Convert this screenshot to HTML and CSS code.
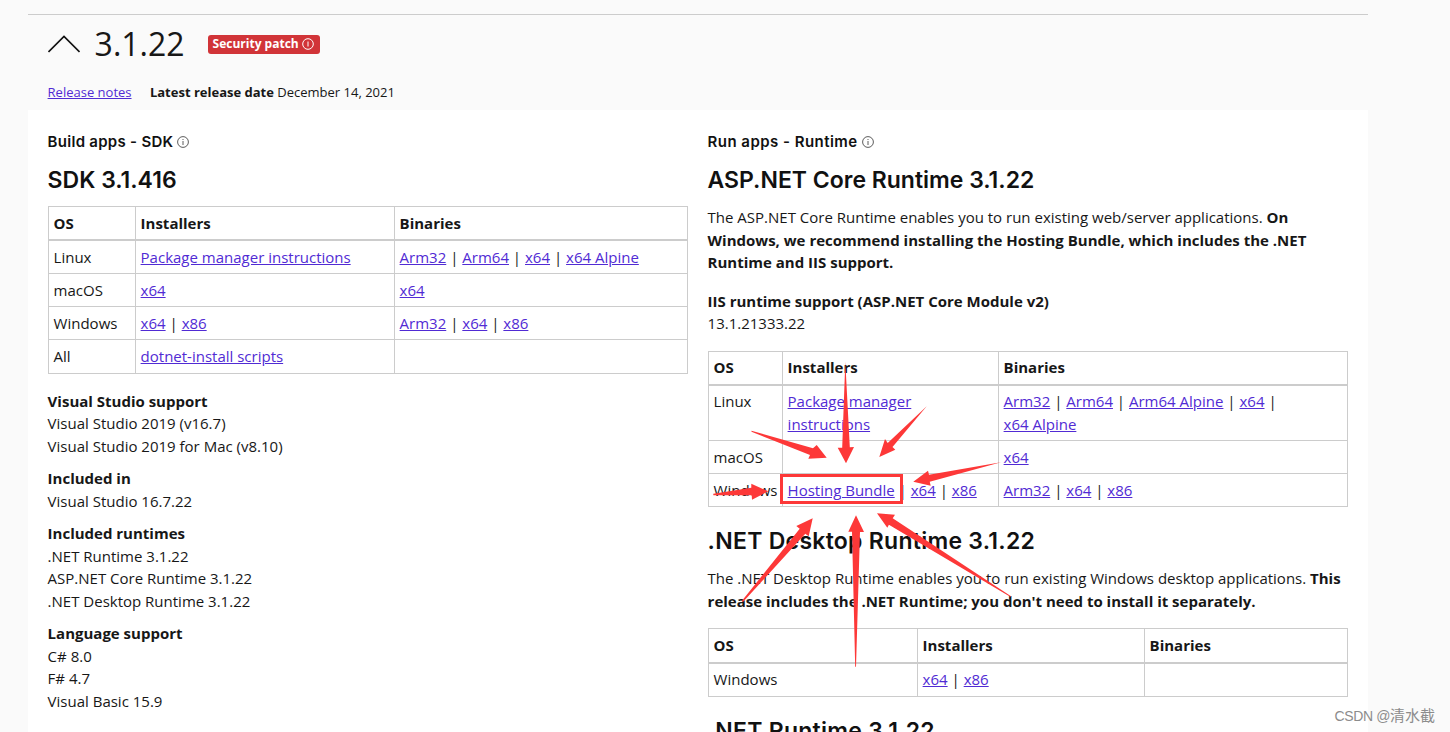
FILE: index.html
```html
<!DOCTYPE html>
<html lang="en">
<head>
  <meta charset="UTF-8" />
  <meta name="viewport" content="width=device-width, initial-scale=1.0"/>
  <title>Download .NET Core 3.1</title>
  <link rel="stylesheet" href="styles.css">
</head>
<body>
  <div class="release">
    <div class="release-header">
      <div class="version-row">
        <svg class="chevron" width="32" height="18" viewBox="0 0 32 18"><path d="M0.5 17L16 1.5L31.5 17" fill="none" stroke="#111" stroke-width="1.6"/></svg>
        <span class="version">3.1.22</span>
        <span class="badge">Security patch
          <svg class="info" width="12" height="12" viewBox="0 0 12 12" fill="none" stroke="currentColor"><circle cx="6" cy="6" r="5.3"/><path d="M6 3.5v5"/></svg>
        </span>
      </div>
      <div class="meta-row">
        <a href="#">Release notes</a>
        <span><b>Latest release date</b> December 14, 2021</span>
      </div>
    </div>

    <div class="release-body">
      <div class="column">
        <h3>Build apps - SDK <svg class="info" width="12" height="12" viewBox="0 0 12 12" fill="none" stroke="currentColor"><circle cx="6" cy="6" r="5.4" stroke-width=".8"/><path d="M6 5v4M6 3v1" stroke-width=".8"/></svg></h3>
        <h2>SDK 3.1.416</h2>
        <table>
          <colgroup><col class="sdk-os"><col class="sdk-inst"><col></colgroup>
          <tr><th>OS</th><th>Installers</th><th>Binaries</th></tr>
          <tr>
            <td>Linux</td>
            <td><a href="#">Package manager instructions</a></td>
            <td><a href="#">Arm32</a> | <a href="#">Arm64</a> | <a href="#">x64</a> | <a href="#">x64 Alpine</a></td>
          </tr>
          <tr><td>macOS</td><td><a href="#">x64</a></td><td><a href="#">x64</a></td></tr>
          <tr>
            <td>Windows</td>
            <td><a href="#">x64</a> | <a href="#">x86</a></td>
            <td><a href="#">Arm32</a> | <a href="#">x64</a> | <a href="#">x86</a></td>
          </tr>
          <tr class="last"><td>All</td><td><a href="#">dotnet-install scripts</a></td><td></td></tr>
        </table>
        <dl>
          <dt>Visual Studio support</dt>
          <dd>Visual Studio 2019 (v16.7)</dd>
          <dd>Visual Studio 2019 for Mac (v8.10)</dd>
          <dt>Included in</dt>
          <dd>Visual Studio 16.7.22</dd>
          <dt>Included runtimes</dt>
          <dd>.NET Runtime 3.1.22</dd>
          <dd>ASP.NET Core Runtime 3.1.22</dd>
          <dd>.NET Desktop Runtime 3.1.22</dd>
          <dt>Language support</dt>
          <dd>C# 8.0</dd>
          <dd>F# 4.7</dd>
          <dd>Visual Basic 15.9</dd>
        </dl>
      </div>

      <div class="column">
        <h3 class="run">Run apps - Runtime <svg class="info" width="12" height="12" viewBox="0 0 12 12" fill="none" stroke="currentColor"><circle cx="6" cy="6" r="5.4" stroke-width=".8"/><path d="M6 5v4M6 3v1" stroke-width=".8"/></svg></h3>
        <h2>ASP.NET Core Runtime 3.1.22</h2>
        <p>The ASP.NET Core Runtime enables you to run existing web/server applications. <b>On Windows, we recommend installing the Hosting Bundle, which includes the .NET Runtime and IIS support.</b></p>
        <p><b>IIS runtime support (ASP.NET Core Module v2)</b><br>13.1.21333.22</p>
        <table class="asp">
          <colgroup><col class="asp-os"><col class="asp-inst"><col></colgroup>
          <tr><th>OS</th><th>Installers</th><th>Binaries</th></tr>
          <tr class="linux">
            <td>Linux</td>
            <td><a href="#">Package manager<br>instructions</a></td>
            <td><a href="#">Arm32</a> | <a href="#">Arm64</a> | <a href="#">Arm64 Alpine</a> | <a href="#">x64</a> |<br><a href="#">x64 Alpine</a></td>
          </tr>
          <tr><td>macOS</td><td></td><td><a href="#">x64</a></td></tr>
          <tr>
            <td>Windows</td>
            <td><a href="#">Hosting Bundle</a> | <a href="#">x64</a> | <a href="#">x86</a></td>
            <td><a href="#">Arm32</a> | <a href="#">x64</a> | <a href="#">x86</a></td>
          </tr>
        </table>
        <h2 class="next">.NET Desktop Runtime 3.1.22</h2>
        <p>The .NET Desktop Runtime enables you to run existing Windows desktop applications. <b>This release includes the .NET Runtime; you don't need to install it separately.</b></p>
        <table class="desktop">
          <colgroup><col class="desk-os"><col class="desk-inst"><col></colgroup>
          <tr><th>OS</th><th>Installers</th><th>Binaries</th></tr>
          <tr><td>Windows</td><td><a href="#">x64</a> | <a href="#">x86</a></td><td></td></tr>
        </table>
        <h2 class="next">.NET Runtime 3.1.22</h2>
      </div>
    </div>
  </div>

  <!-- arrows pointing at the hosting bundle link -->
  <svg class="marks" width="1450" height="732" viewBox="0 0 1450 732" fill="#fd3838">
    <rect x="781.5" y="475.5" width="120" height="27" fill="none" stroke="#fd3838" stroke-width="3"/>
    <path d="M751.5 430.8L813 448.3L816.7 445L826.7 457.7L808.3 458.7L810 455L751.5 431.8Z"/>
    <path d="M845.3 361.7L849.8 447.3L854 447L846 463.3L837.7 447.7L842.2 447.7Z"/>
    <path d="M926.7 406.3L892.5 447L895.3 449.7L879.3 457L885 439L887.7 443Z"/>
    <path d="M1001 462.3L929.7 481.7L930.7 485.7L913.3 481.7L928 470.7L929 474.7Z"/>
    <path d="M713.3 493.8L751.3 487.7L751.3 483.7L768.3 491.3L752 499.7L751.7 495.3L713.3 495.3Z"/>
    <path d="M741.8 601L799.7 528.7L796.3 526L812.7 518.3L808.7 536.3L805.3 533.7L743 602Z"/>
    <path d="M855.2 666.7L852 531.7L848.3 531.7L856 515.3L864 532L860 532L856 666.7Z"/>
    <path d="M1011 596.3L892.7 518.3L895 514.7L877 513.3L887.3 527.7L888.9 524.7L1010.6 597Z"/>
  </svg>
  <div class="watermark"><span>CSDN @</span>清水截</div>
</body>
</html>
```

FILE: styles.css
```css
* {
  box-sizing: border-box;
}
body {
  margin: 0;
  height: 732px;
  overflow: hidden;
  position: relative;
  background: #fafafa;
  color: #171717;
  font-family: "Open Sans", sans-serif;
  font-size: 15px;
  line-height: 22.5px;
}
a {
  color: #512bd4;
  text-decoration: underline;
}
b, th, dt {
  font-weight: 700;
}
.release {
  width: 1340px;
  margin: 14px 0 0 27.6px;
  border-top: 1px solid #ccc;
}
.release-header {
  height: 95px;
  padding: 0 20px;
}
.version-row {
  display: flex;
  align-items: center;
  height: 58px;
}
.chevron {
  margin-bottom: 1px;
}
.version {
  margin-left: 15px;
  width: 113px;
  font-size: 32px;
  line-height: 40px;
}
.badge {
  display: flex;
  align-items: center;
  gap: 3px;
  width: 112px;
  height: 19px;
  padding: 0 5px;
  border-radius: 3px;
  background: #d13438;
  color: #fff;
  font-size: 12px;
  font-weight: 700;
  white-space: nowrap;
}
.badge .info {
  flex: none;
  margin-bottom: 1px;
}
.meta-row {
  display: flex;
  gap: 18.4px;
  padding-top: 8px;
  font-size: 13px;
}
.release-body {
  display: flex;
  gap: 20px;
  padding: 21px 20px 0;
  height: 622px;
  background: #fff;
}
.column {
  width: 640px;
}
h2, h3 {
  margin: 0;
  color: #111;
  font-family: Inter, sans-serif;
  font-weight: 600;
}
h3 {
  font-size: 15px;
  line-height: 22px;
  letter-spacing: 0.28px;
}
h3.run {
  letter-spacing: 0.46px;
}
h3 .info {
  color: #333;
  vertical-align: -1px;
}
h2 {
  margin: 12px 0 11px;
  font-size: 23px;
  line-height: 30px;
}
h2.next {
  margin-top: 19px;
  letter-spacing: 0.27px;
}
p {
  margin: 0 0 16px;
}
table {
  width: 640px;
  border-collapse: collapse;
  table-layout: fixed;
}
th, td {
  padding: 5px 5px 4.5px;
  border: 1px solid #ccc;
  text-align: left;
  vertical-align: top;
}
th {
  padding-top: 4.7px;
  border-bottom-width: 2px;
}
.asp th {
  padding-bottom: 5px;
}
.asp .linux td {
  padding-top: 4.4px;
  padding-bottom: 5.1px;
}
.desktop th {
  padding: 5.2px 5px;
}
.desktop td {
  padding-top: 4.4px;
  padding-bottom: 4.8px;
}
.last td {
  padding-bottom: 5.5px;
}
.sdk-os { width: 87px; }
.sdk-inst { width: 259px; }
.asp-os { width: 74px; }
.asp-inst { width: 216px; }
.desk-os { width: 209px; }
.desk-inst { width: 227px; }
dl {
  margin: 16px 0 0;
}
dt {
  margin-top: 10px;
}
dd {
  margin: 0;
}
.marks {
  position: absolute;
  left: 0;
  top: 0;
}
.watermark {
  position: absolute;
  right: 15px;
  bottom: 5px;
  color: #8c8c8c;
  font-family: "Liberation Sans", "Noto Sans CJK SC", sans-serif;
  font-size: 15px;
}
.watermark span {
  font-size: 14px;
  letter-spacing: -0.4px;
}
```
